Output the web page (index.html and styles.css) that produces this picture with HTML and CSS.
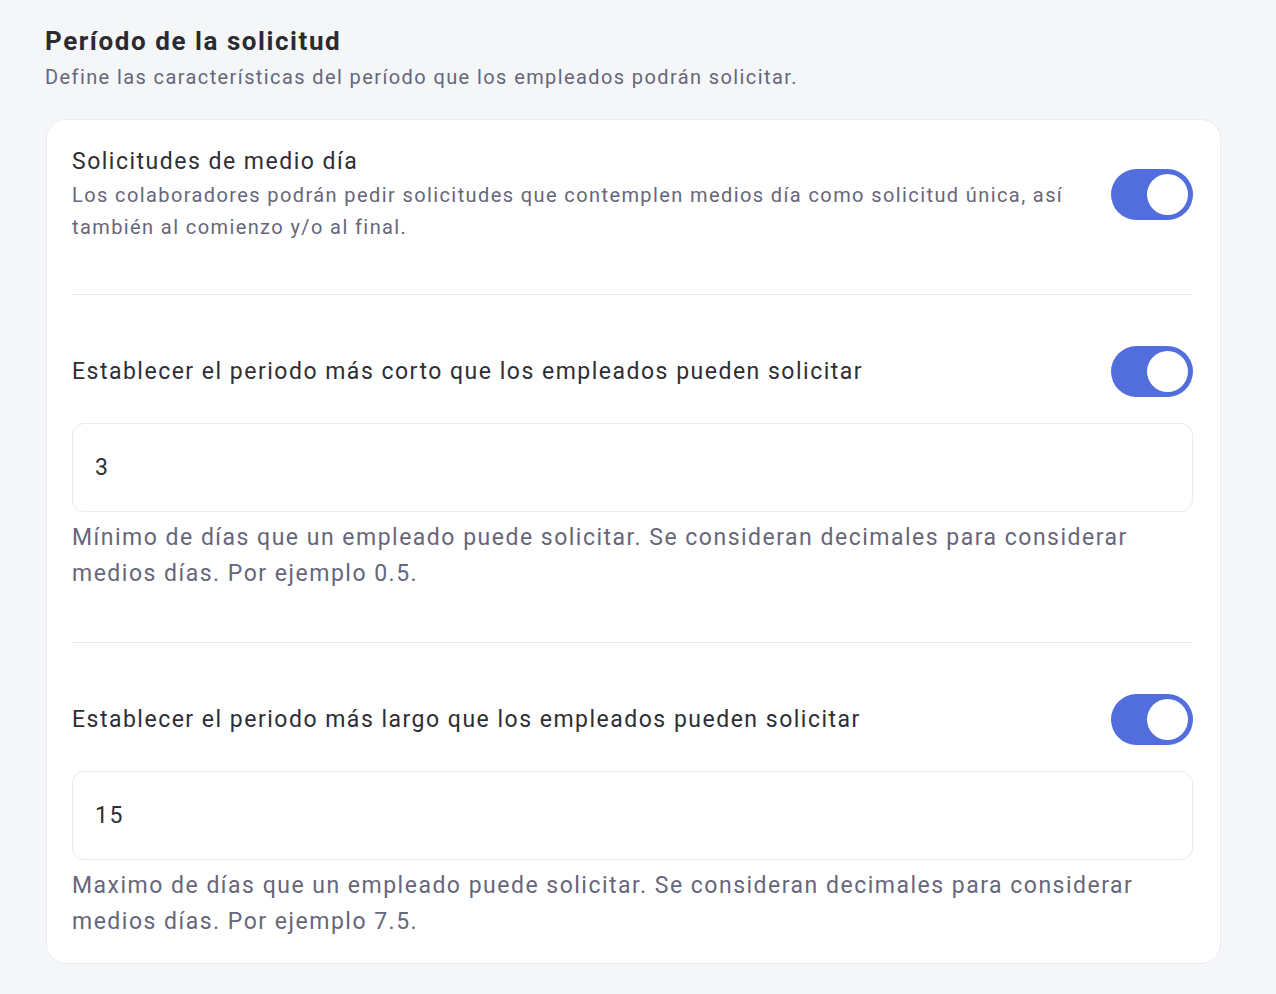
FILE: index.html
```html
<!DOCTYPE html>
<html lang="es">

<head>
    <meta charset="UTF-8">
    <meta name="viewport" content="width=device-width, initial-scale=1.0">
    <title>Período de la solicitud</title>

    <link rel="stylesheet" href="styles.css">
</head>

<body>
    <div class="page">
        <h1 class="page-title">Período de la solicitud</h1>
        <p class="page-desc">Define las características del período que los empleados podrán solicitar.</p>

        <div class="card">
            <div class="section">
                <div class="section-row">
                    <div class="section-text">
                        <div class="section-title">Solicitudes de medio día</div>
                        <div class="section-desc">Los colaboradores podrán pedir solicitudes que contemplen medios día como solicitud única, así también al comienzo y/o al final.</div>
                    </div>
                    <span class="switch on"><span class="knob"></span></span>
                </div>
            </div>

            <div class="section">
                <div class="section-row">
                    <div class="section-label">Establecer el periodo más corto que los empleados pueden solicitar</div>
                    <span class="switch on"><span class="knob"></span></span>
                </div>
                <input class="field" type="text" value="3">
                <p class="help">Mínimo de días que un empleado puede solicitar. Se consideran decimales para considerar medios días. Por ejemplo 0.5.</p>
            </div>

            <div class="section">
                <div class="section-row">
                    <div class="section-label">Establecer el periodo más largo que los empleados pueden solicitar</div>
                    <span class="switch on"><span class="knob"></span></span>
                </div>
                <input class="field" type="text" value="15">
                <p class="help">Maximo de días que un empleado puede solicitar. Se consideran decimales para considerar medios días. Por ejemplo 7.5.</p>
            </div>
        </div>
    </div>
</body>

</html>
```

FILE: styles.css
```css
* {
    margin: 0;
    padding: 0;
    box-sizing: border-box;
}

body {
    background-color: #f5f6f8;
    font-family: Roboto, "Noto Sans", Arial, sans-serif;
    color: #2e2e35;
}

.page {
    width: 1221px;
    padding: 25px 0 30px 46px;
}

.page-title {
    margin-left: -1px;
    font-size: 26px;
    line-height: 32px;
    font-weight: 700;
    letter-spacing: 0.06em;
    color: #2a2a30;
}

.page-desc {
    margin-top: 6px;
    margin-left: -1px;
    font-size: 20px;
    line-height: 28px;
    letter-spacing: 0.07em;
    color: #67667a;
}

.card {
    margin-top: 28px;
    padding: 0 27px 0 25px;
    background-color: #fff;
    border: 1px solid #ebecef;
    border-radius: 20px;
}

.section {
    padding: 51px 0 49px;
    border-bottom: 1px solid #ebecef;
}

.section:first-child {
    padding-top: 26px;
}

.section:last-child {
    padding-bottom: 23px;
    border-bottom: none;
}

.section-row {
    display: flex;
    align-items: center;
    justify-content: space-between;
    gap: 40px;
}

.section-title {
    font-size: 23px;
    line-height: 32px;
    letter-spacing: 0.065em;
    color: #2e2e35;
}

.section-desc {
    margin-top: 1px;
    margin-bottom: 2px;
    font-size: 20px;
    line-height: 32px;
    letter-spacing: 0.07em;
    color: #67667a;
}

.section-label {
    font-size: 23px;
    line-height: 51px;
    letter-spacing: 0.065em;
    color: #2e2e35;
}

.switch {
    flex: none;
    display: flex;
    align-items: center;
    justify-content: flex-end;
    width: 82px;
    height: 51px;
    padding: 0 5px;
    border-radius: 26px;
    background-color: #526ddc;
}

.section-text + .switch {
    margin-bottom: 3px;
}

.switch .knob {
    width: 41px;
    height: 41px;
    border-radius: 50%;
    background-color: #fff;
}

.field {
    display: block;
    width: 100%;
    height: 89px;
    margin-top: 26px;
    padding: 0 22px;
    border: 1px solid #e9eaee;
    border-radius: 12px;
    font-family: inherit;
    font-size: 23px;
    letter-spacing: 0.065em;
    color: #2e2e35;
    background-color: #fff;
    outline: none;
}

.help {
    margin-top: 8px;
    margin-bottom: 1px;
    font-size: 23px;
    line-height: 36px;
    letter-spacing: 0.065em;
    color: #67667a;
}

.section:last-child .help {
    margin-bottom: 0;
}
```
